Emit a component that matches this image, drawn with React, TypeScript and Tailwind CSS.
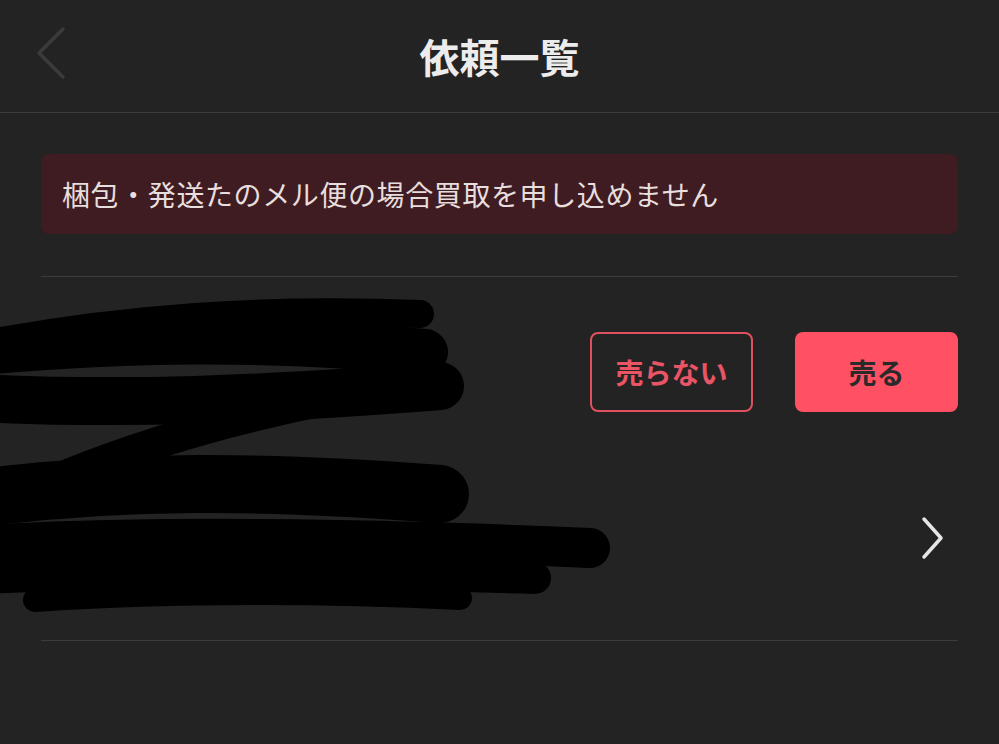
const font = { fontFamily: '"Noto Sans CJK JP", "Noto Sans", sans-serif' };

// redaction scribble drawn over the item
function Scribble() {
  return (
    <svg
      className="pointer-events-none absolute left-0 top-0"
      width="999"
      height="744"
      viewBox="0 0 999 744"
    >
      <g stroke="#000" strokeLinecap="round" fill="none">
        <path d="M-20 345 C 120 318, 260 308, 420 314" strokeWidth="28" />
        <path d="M-20 352 C 120 340, 260 336, 425 352" strokeWidth="46" />
        <path d="M-20 398 C 120 405, 260 400, 440 386" strokeWidth="48" />
        <path d="M70 474 C 180 430, 300 400, 440 380" strokeWidth="32" />
        <path d="M-20 498 C 120 480, 260 480, 440 494" strokeWidth="58" />
        <path d="M-20 545 C 160 535, 360 538, 590 548" strokeWidth="40" />
        <path d="M-20 578 C 160 570, 320 572, 535 578" strokeWidth="32" />
        <path d="M35 600 C 180 590, 340 592, 460 598" strokeWidth="24" />
      </g>
    </svg>
  );
}

export default function App() {
  return (
    <div className="relative h-[744px] w-[999px] overflow-hidden bg-[#232323]" style={font}>
      <header className="relative flex h-[113px] items-center justify-center border-b border-[#3c3c3c]">
        <svg className="absolute left-[30px] top-[22px]" width="44" height="64" viewBox="0 0 44 64">
          <polyline
            points="33,7 9,31 33,55"
            fill="none"
            stroke="#3b3b3b"
            strokeWidth="3.5"
            strokeLinecap="round"
            strokeLinejoin="round"
          />
        </svg>
        <h1 className="text-[40px] font-bold leading-none text-[#ececec]">依頼一覧</h1>
      </header>

      <div className="px-[41px]">
        <div className="mt-[41px] flex h-[80px] items-center rounded-[8px] bg-[#3f1c21] px-[21px]">
          <p className="text-[28px] tracking-[0.6px] text-[#e8dede]">
            梱包・発送たのメル便の場合買取を申し込めません
          </p>
        </div>

        <div className="mt-[42px] border-t border-[#3c3c3c]" />

        <div className="flex h-[364px] flex-col items-end border-b border-[#3c3c3c]">
          <div className="mt-[55px] flex gap-[42px]">
            <button className="flex h-[80px] w-[163px] items-center justify-center rounded-[8px] border-2 border-[#e0515f] text-[28px] font-bold text-[#ea5565]">
              売らない
            </button>
            <button className="flex h-[80px] w-[163px] items-center justify-center rounded-[8px] bg-[#ff5064] text-[28px] font-bold text-[#2a2a2a]">
              売る
            </button>
          </div>
          <svg className="mr-[12px] mt-[101px]" width="28" height="50" viewBox="0 0 28 50">
            <polyline
              points="6,6 23,25 6,44"
              fill="none"
              stroke="#e6e6e6"
              strokeWidth="3.5"
              strokeLinecap="round"
              strokeLinejoin="round"
            />
          </svg>
        </div>
      </div>

      <Scribble />
    </div>
  );
}
